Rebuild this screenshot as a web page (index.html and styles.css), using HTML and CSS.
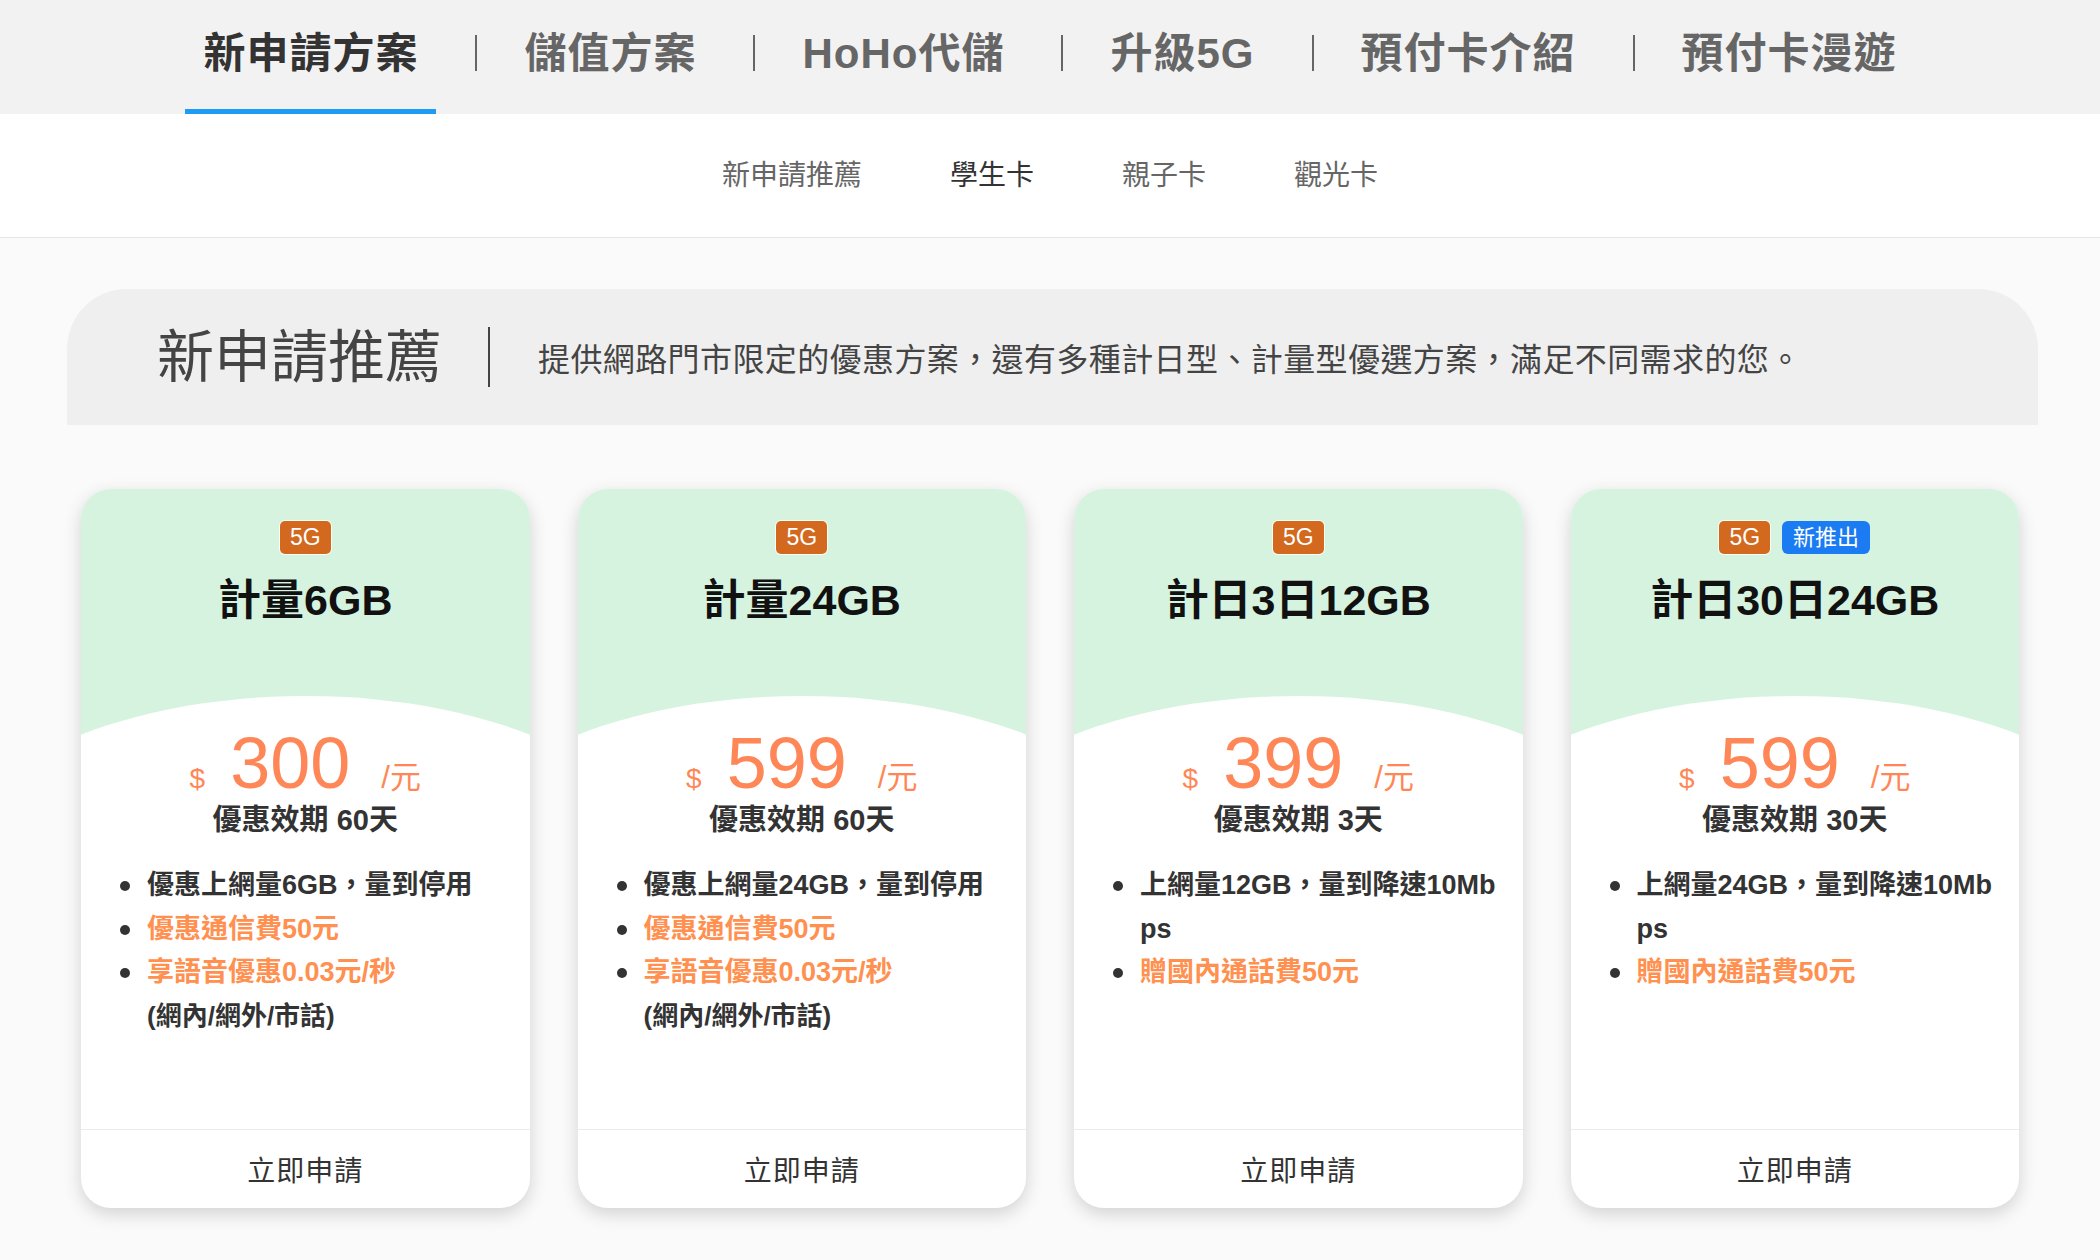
FILE: index.html
```html
<!DOCTYPE html>
<html lang="zh-Hant">
<head>
  <meta charset="UTF-8">
  <meta name="viewport" content="width=device-width, initial-scale=1.0">
  <title>新申請方案</title>
  <link rel="stylesheet" href="styles.css">
</head>
<body>
  <nav class="main-nav">
    <a class="main-nav-item active">新申請方案</a>
    <span class="main-nav-sep"></span>
    <a class="main-nav-item">儲值方案</a>
    <span class="main-nav-sep"></span>
    <a class="main-nav-item">HoHo代儲</a>
    <span class="main-nav-sep"></span>
    <a class="main-nav-item">升級5G</a>
    <span class="main-nav-sep"></span>
    <a class="main-nav-item">預付卡介紹</a>
    <span class="main-nav-sep"></span>
    <a class="main-nav-item">預付卡漫遊</a>
  </nav>

  <nav class="sub-nav">
    <a class="sub-nav-item">新申請推薦</a>
    <a class="sub-nav-item current">學生卡</a>
    <a class="sub-nav-item">親子卡</a>
    <a class="sub-nav-item">觀光卡</a>
  </nav>

  <main class="plans">
    <div class="plans-intro">
      <h2 class="plans-title">新申請推薦</h2>
      <p class="plans-desc">提供網路門市限定的優惠方案，還有多種計日型、計量型優選方案，滿足不同需求的您。</p>
    </div>

    <div class="plan-list">
      <!-- 計量型 -->
      <div class="plan-card">
        <div class="plan-head">
          <div class="plan-tags"><span class="tag tag-5g">5G</span></div>
          <h3 class="plan-name">計量6GB</h3>
        </div>
        <div class="plan-body">
          <div class="plan-price"><span class="currency">$</span><span class="amount">300</span><span class="unit">/元</span></div>
          <div class="plan-valid">優惠效期 60天</div>
          <ul class="plan-features">
            <li>優惠上網量6GB，量到停用</li>
            <li class="highlight">優惠通信費50元</li>
            <li class="highlight">享語音優惠0.03元/秒<span class="note">(網內/網外/市話)</span></li>
          </ul>
        </div>
        <a class="plan-apply">立即申請</a>
      </div>

      <div class="plan-card">
        <div class="plan-head">
          <div class="plan-tags"><span class="tag tag-5g">5G</span></div>
          <h3 class="plan-name">計量24GB</h3>
        </div>
        <div class="plan-body">
          <div class="plan-price"><span class="currency">$</span><span class="amount">599</span><span class="unit">/元</span></div>
          <div class="plan-valid">優惠效期 60天</div>
          <ul class="plan-features">
            <li>優惠上網量24GB，量到停用</li>
            <li class="highlight">優惠通信費50元</li>
            <li class="highlight">享語音優惠0.03元/秒<span class="note">(網內/網外/市話)</span></li>
          </ul>
        </div>
        <a class="plan-apply">立即申請</a>
      </div>

      <!-- 計日型 -->
      <div class="plan-card">
        <div class="plan-head">
          <div class="plan-tags"><span class="tag tag-5g">5G</span></div>
          <h3 class="plan-name">計日3日12GB</h3>
        </div>
        <div class="plan-body">
          <div class="plan-price"><span class="currency">$</span><span class="amount">399</span><span class="unit">/元</span></div>
          <div class="plan-valid">優惠效期 3天</div>
          <ul class="plan-features">
            <li>上網量12GB，量到降速10Mbps</li>
            <li class="highlight">贈國內通話費50元</li>
          </ul>
        </div>
        <a class="plan-apply">立即申請</a>
      </div>

      <div class="plan-card">
        <div class="plan-head">
          <div class="plan-tags"><span class="tag tag-5g">5G</span><span class="tag tag-new">新推出</span></div>
          <h3 class="plan-name">計日30日24GB</h3>
        </div>
        <div class="plan-body">
          <div class="plan-price"><span class="currency">$</span><span class="amount">599</span><span class="unit">/元</span></div>
          <div class="plan-valid">優惠效期 30天</div>
          <ul class="plan-features">
            <li>上網量24GB，量到降速10Mbps</li>
            <li class="highlight">贈國內通話費50元</li>
          </ul>
        </div>
        <a class="plan-apply">立即申請</a>
      </div>
    </div>
  </main>
</body>
</html>
```

FILE: styles.css
```css
body {
  margin: 0;
  font-family: "Liberation Sans", "Noto Sans CJK TC", sans-serif;
  color: #333;
  background: #fafafa;
}

a {
  text-decoration: none;
  color: inherit;
}

/* top tabs */
.main-nav {
  display: flex;
  justify-content: center;
  align-items: center;
  height: 114px;
  background: #f2f2f2;
}

.main-nav-item {
  box-sizing: border-box;
  display: flex;
  align-items: center;
  height: 114px;
  padding: 0 18px 10px;
  border-bottom: 5px solid transparent;
  font-size: 42px;
  font-weight: bold;
  letter-spacing: 1px;
  color: #666;
}

.main-nav-item.active {
  color: #333;
  border-bottom-color: #1e9cf5;
}

.main-nav-sep {
  width: 2px;
  height: 36px;
  margin: 0 29px 8px 39px;
  background: #666;
}

/* second level tabs */
.sub-nav {
  box-sizing: border-box;
  display: flex;
  justify-content: center;
  align-items: center;
  gap: 88px;
  height: 124px;
  padding-bottom: 6px;
  background: #fff;
  border-bottom: 1px solid #e6e6e6;
}

.sub-nav-item {
  font-size: 28px;
  color: #666;
}

.sub-nav-item.current {
  color: #333;
}

/* content */
.plans {
  max-width: 1972px;
  margin: 0 auto;
  padding: 51px 0 52px;
}

.plans-intro {
  display: flex;
  align-items: center;
  height: 136px;
  margin: 0 -2px 0 3px;
  padding-left: 90px;
  background: #efefef;
  border-radius: 60px 60px 0 0;
}

.plans-title {
  margin: 0;
  padding-right: 46px;
  border-right: 2px solid #444;
  font-size: 57px;
  font-weight: normal;
  line-height: 60px;
  color: #444;
}

.plans-desc {
  margin: 0 0 0 48px;
  font-size: 32px;
  letter-spacing: 0.4px;
  color: #444;
}

.plan-list {
  display: grid;
  grid-template-columns: repeat(4, 1fr);
  gap: 48px;
  padding: 64px 17px 0;
}

.plan-card {
  display: flex;
  flex-direction: column;
  min-height: 719px;
  background: #fff;
  border-radius: 30px;
  overflow: hidden;
  box-shadow: 0 6px 18px rgba(0, 0, 0, 0.16);
}

.plan-head {
  box-sizing: border-box;
  height: 246px;
  padding-top: 32px;
  text-align: center;
  background: #d5f3df;
}

.plan-tags {
  display: flex;
  justify-content: center;
  gap: 12px;
}

.tag {
  height: 33px;
  padding: 0 10px;
  border-radius: 5px;
  font-size: 23px;
  line-height: 33px;
  color: #fff;
}

.tag-5g {
  background: #d2691e;
  box-shadow: 0 0 0 1px rgba(255, 255, 255, 0.8);
}

.tag-new {
  padding: 0 11px;
  font-size: 22px;
  background: #1a7bf2;
  border-radius: 6px;
}

.plan-name {
  margin: 20px 0 0;
  font-size: 43px;
  line-height: 52px;
  color: #111;
}

.plan-body {
  position: relative;
  z-index: 0;
  flex: 1;
  background: #fff;
}

/* white curved top over the green header */
.plan-body::before {
  content: "";
  position: absolute;
  z-index: -1;
  top: -39px;
  left: -135px;
  right: -135px;
  height: 200px;
  background: #fff;
  border-radius: 50% 50% 0 0 / 177px 177px 0 0;
}

.plan-price {
  display: flex;
  justify-content: center;
  align-items: baseline;
  color: #ff8757;
}

.currency {
  margin-right: 25px;
  font-size: 28px;
  line-height: 1;
}

.amount {
  font-size: 72px;
  line-height: 56px;
}

.unit {
  margin-left: 31px;
  font-size: 31px;
  line-height: 1;
}

.plan-valid {
  margin-top: 9px;
  font-size: 29px;
  font-weight: bold;
  line-height: 36px;
  text-align: center;
  color: #333;
}

.plan-features {
  margin: 26px 0 0;
  padding: 0 22px 0 66px;
  list-style: none;
}

.plan-features li {
  position: relative;
  font-size: 27px;
  font-weight: bold;
  line-height: 43.5px;
  word-break: break-all;
  color: #333;
}

.plan-features li::before {
  content: "";
  position: absolute;
  left: -27px;
  top: 17px;
  width: 10px;
  height: 10px;
  border-radius: 50%;
  background: #333;
}

.plan-features li.highlight {
  color: #ff904f;
}

.plan-features .note {
  display: block;
  font-size: 26px;
  color: #333;
}

.plan-apply {
  display: flex;
  justify-content: center;
  align-items: center;
  height: 78px;
  border-top: 1px solid #ebebeb;
  font-size: 28px;
  letter-spacing: 1px;
  color: #333;
}
```
